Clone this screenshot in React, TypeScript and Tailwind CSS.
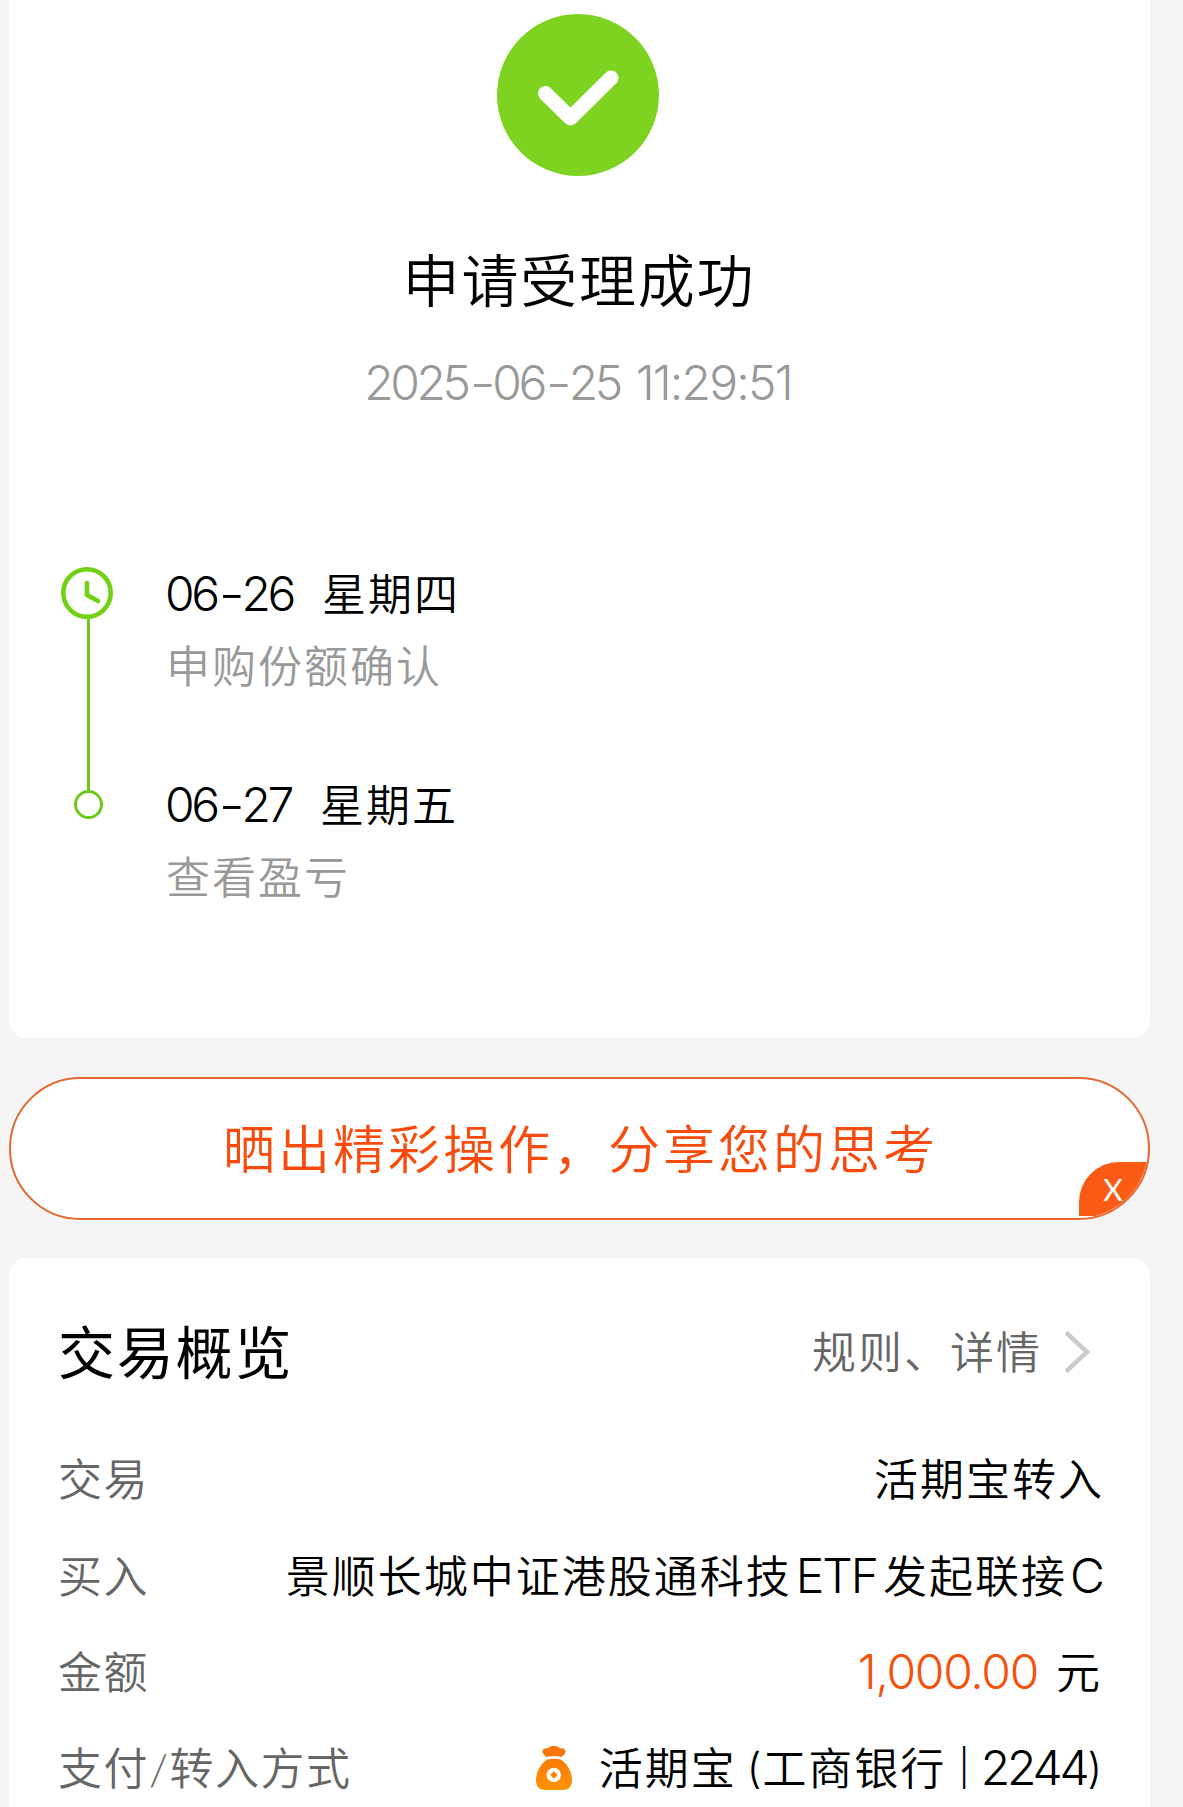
import type { ReactNode } from "react";

function Latin({ children, className = "" }: { children: ReactNode; className?: string }) {
  return <span className={`font-[Inter] leading-none ${className}`}>{children}</span>;
}

function Dash() {
  return <span className="-mr-px ml-[4px] inline-block scale-x-120 tracking-normal">-</span>;
}

function MoneyBag() {
  return (
    <svg width="36" height="44" viewBox="0 0 36 44" className="flex-none">
      <defs>
        <linearGradient id="bag" x1="0" y1="0" x2="0" y2="1">
          <stop offset="0" stopColor="#f97a0c" />
          <stop offset="1" stopColor="#ff9300" />
        </linearGradient>
      </defs>
      <path
        d="M10.500 11C9.500 9.500 6.500 8 6.500 5.200 6.500 2.500 9 1.800 12 2.300 13.500.5 15.500 0 18 0s4.500.5 6 2.300c3-.5 5.500.2 5.500 2.900 0 2.800-3 4.300-4 5.800-5-1.300-10-1.300-15 0z"
        fill="#fb7608"
      />
      <path
        d="M11.500 13.500c4.300-1 8.700-1 13 0C31 17 36 26 36 34c0 7-4 10-9 10H9c-5 0-9-3-9-10 0-8 5-17 11.500-20.500z"
        fill="url(#bag)"
      />
      <circle cx="17.800" cy="29" r="7.200" fill="#fff" />
      <path d="M17.800 25.300 21.500 29l-3.700 3.700L14.100 29z" fill="#ff8400" />
    </svg>
  );
}

function Row({ label, children }: { label: string; children: ReactNode }) {
  return (
    <div className="flex h-[96.4px] items-center justify-between whitespace-nowrap">
      <span className="tracking-[1.500px] text-[#666]">{label}</span>
      <div className="flex items-center text-black">{children}</div>
    </div>
  );
}

export default function App() {
  return (
    <div className="h-[1807px] w-[1183px] overflow-hidden bg-[#f5f5f5] pl-[9px] font-[Lato,'Noto_Sans_CJK_SC',sans-serif] text-[44px] leading-[54px] font-[350] tracking-[2px] text-black">
      <section className="h-[1038px] w-[1141px] rounded-b-[18px] bg-white pt-[14px]">
        <div className="flex flex-col items-center pr-[3px]">
          <svg width="162" height="162" viewBox="0 0 162 162">
            <circle cx="81" cy="81" r="81" fill="#7ed321" />
            <path
              d="M48.500 79.500 73.500 104 114 64"
              fill="none"
              stroke="#fff"
              strokeWidth="15"
              strokeLinecap="round"
              strokeLinejoin="round"
            />
          </svg>
          <h1 className="mt-[74px] pl-[2px] text-[57px] leading-[60px] tracking-[1.8px]">申请受理成功</h1>
          <p className="mt-[49px] font-[Inter] text-[48px] leading-[48px] whitespace-pre text-[#999]">
            <span className="tracking-[-3.400px]">
              2025
              <Dash />
              06
              <Dash />
              25
            </span>
            <span className="ml-[4px] tracking-[-1.800px]"> 11:29:51</span>
          </p>
        </div>

        <div className="mt-[160px] pl-[52px]">
          <div className="flex h-[223px]">
            <div className="flex w-[53px] flex-none flex-col items-center">
              <svg width="52" height="52" viewBox="0 0 52 52" className="mr-px flex-none">
                <g fill="none" stroke="#72d116" strokeLinecap="round" strokeLinejoin="round">
                  <circle cx="26" cy="26" r="23.700" strokeWidth="4.600" />
                  <path d="M26 16v12l11 6" strokeWidth="4.600" />
                </g>
              </svg>
              <div className="ml-[2px] w-[3px] flex-1 bg-[#6fc91a]" />
            </div>
            <div className="ml-[52px]">
              <p className="whitespace-nowrap">
                <Latin className="-ml-px text-[48px] tracking-[-3.400px]">
                  06
                  <Dash />
                  26
                </Latin>
                <span className="ml-[29px]">星期四</span>
              </p>
              <p className="mt-[18px] text-[#999]">申购份额确认</p>
            </div>
          </div>
          <div className="flex">
            <div className="flex w-[53px] flex-none justify-center">
              <div className="ml-[2px] size-[29px] rounded-full border-3 border-[#6fc91a]" />
            </div>
            <div className="-mt-[12px] ml-[52px]">
              <p className="whitespace-nowrap">
                <Latin className="-ml-px text-[48px] tracking-[-3.400px]">
                  06
                  <Dash />
                  27
                </Latin>
                <span className="ml-[29px]">星期五</span>
              </p>
              <p className="mt-[18px] text-[#999]">查看盈亏</p>
            </div>
          </div>
        </div>
      </section>

      <button className="relative mt-[39px] block h-[143px] w-[1141px] overflow-hidden rounded-full border-2 border-[#e4682f] bg-white pl-[2px] text-center text-[52px] tracking-[3px] text-[#f94b0b]">
        晒出精彩操作，分享您的思考
        <span className="absolute right-0 bottom-[2px] h-[54px] w-[69px] rounded-tl-[40px] bg-[#fb5a14] pr-[1px] text-center text-[30px] leading-[54px] font-normal tracking-normal text-white">
          X
        </span>
      </button>

      <section className="mt-[38px] h-[600px] w-[1141px] rounded-t-[18px] bg-white pt-[60px] pr-[48px] pl-[49px]">
        <div className="flex h-[68px] items-center justify-between">
          <h2 className="text-[57px] leading-[68px] font-normal tracking-[1.8px]">交易概览</h2>
          <div className="flex items-center text-[#666]">
            规则、详情
            <svg width="27" height="44" viewBox="0 0 27 44" className="mr-[11px] ml-[22px]">
              <path d="M2 2.500 23 22 2 41.500" fill="none" stroke="#ccc" strokeWidth="4.500" />
            </svg>
          </div>
        </div>
        <div className="mt-[45px]">
          <Row label="交易">
            <span className="-mr-[2px]">活期宝转入</span>
          </Row>
          <Row label="买入">
            <span>
              景顺长城中证港股通科技
              <Latin className="mr-[6px] ml-[4px] text-[48px] tracking-[-2px]">ETF</Latin>
              发起联接
              <Latin className="ml-[3px] text-[48px] tracking-[-3px]">C</Latin>
            </span>
          </Row>
          <Row label="金额">
            <Latin className="text-[48px] tracking-[-1.300px] text-[#f4510b]">1,000.00</Latin>
            <span className="ml-[18px]">元</span>
          </Row>
          <Row label="支付/转入方式">
            <MoneyBag />
            <span className="ml-[27px]">活期宝</span>
            <Latin className="ml-[10px] text-[42px] tracking-[1px]">(</Latin>
            <span>工商银行</span>
            <Latin className="mr-[9px] ml-[12px] text-[36px]">|</Latin>
            <Latin className="text-[48px] tracking-[-3.200px]">2244</Latin>
            <Latin className="ml-[1px] text-[42px] tracking-normal">)</Latin>
          </Row>
        </div>
      </section>
    </div>
  );
}
